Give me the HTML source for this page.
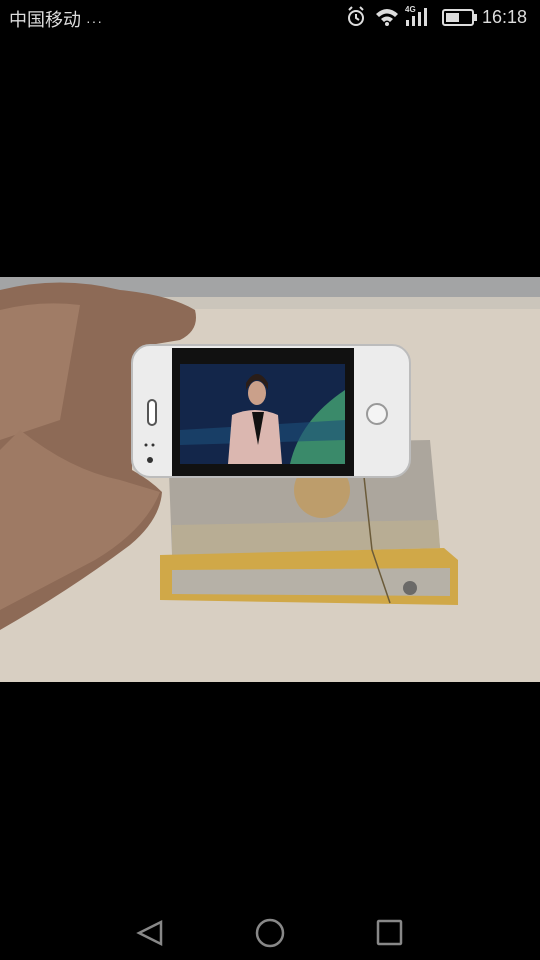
<!DOCTYPE html>
<html><head><meta charset="utf-8"><style>
html,body{margin:0;padding:0;background:#000;width:540px;height:960px;overflow:hidden}
.sb{position:absolute;top:0;left:0;width:540px;height:36px;color:#ddd;font-family:"Liberation Sans","Noto Sans CJK SC",sans-serif}
</style></head><body>
<div class="sb">
<div style="position:absolute;left:9px;top:6px;font-size:18px;color:#ddd">中国移动 <span style="font-size:14px;letter-spacing:1px">···</span></div>
<div style="position:absolute;left:482px;top:7px;font-size:18px;color:#ddd">16:18</div>
</div>
<svg width="540" height="960" style="position:absolute;left:0;top:0" xmlns="http://www.w3.org/2000/svg">
<g fill="none" stroke="#ddd" stroke-width="2">
<circle cx="356" cy="18" r="7"/><path d="M356 14v4l3 2M349 10l3-3M363 10l-3-3"/>
<rect x="443" y="10" width="30" height="15" rx="2"/>
</g>
<rect x="474" y="14" width="3" height="7" fill="#ddd"/>
<rect x="446" y="13" width="13" height="9" fill="#ddd"/>
<path d="M376 14 Q387 4 398 14 L395 17 Q387 10 379 17Z M381 19 Q387 14 393 19 L390 22 Q387 19 384 22Z" fill="#ddd"/>
<circle cx="387" cy="24" r="2" fill="#ddd"/>
<text x="405" y="12" font-size="8" font-weight="bold" fill="#ddd" font-family="Liberation Sans">4G</text>
<g fill="#ddd"><rect x="406" y="20" width="3" height="6"/><rect x="412" y="16" width="3" height="10"/><rect x="418" y="12" width="3" height="14"/><rect x="424" y="8" width="3" height="18"/></g>
<!-- photo -->
<rect x="0" y="277" width="540" height="405" fill="#d8cfc2"/>
<rect x="0" y="277" width="540" height="20" fill="#a3a4a5"/>
<rect x="0" y="297" width="540" height="12" fill="#cbc5bb"/>
<!-- box -->
<path d="M168 445 L430 440 L440 548 L172 555Z" fill="#aca69d"/>
<path d="M172 525 L172 555 L440 548 L438 520Z" fill="#b8ad94"/>
<path d="M160 555 L444 548 L458 560 L458 605 L160 600Z" fill="#d0a848"/>
<path d="M172 570 L450 568 L450 596 L172 594Z" fill="#b6b1a7"/>
<path d="M360 440 L372 550 L390 603" stroke="#6b5b3a" stroke-width="1.5" fill="none"/>
<circle cx="322" cy="490" r="28" fill="#c49a55" opacity="0.7"/>
<circle cx="410" cy="588" r="7" fill="#6b6a68"/>
<!-- hand -->
<path d="M0 290 Q60 275 120 290 Q170 295 195 310 Q200 330 180 340 L150 345 Q140 370 132 400 L132 470 Q150 480 162 492 Q160 520 130 545 Q70 590 0 630Z" fill="#8d6a56"/>
<path d="M0 310 Q40 300 80 305 L60 420 L0 440Z" fill="#a07c66"/>
<path d="M20 430 Q70 470 120 480 L160 492 Q145 530 95 560 L0 610 L0 450Z" fill="#9e7a64"/>
<!-- phone -->
<rect x="132" y="345" width="278" height="132" rx="18" fill="#ececec"/>
<rect x="132" y="345" width="278" height="132" rx="18" fill="none" stroke="#bcbcbc" stroke-width="2"/>
<rect x="172" y="348" width="182" height="128" fill="#111"/>
<rect x="180" y="364" width="165" height="100" fill="#13264a"/>
<path d="M290 464 Q300 420 345 390 L345 464Z" fill="#3a8a6a"/>
<path d="M180 430 L345 420 L345 440 L180 445Z" fill="#1d4f7a" opacity="0.6"/>
<path d="M228 464 L232 415 Q255 405 278 415 L282 464Z" fill="#dbb7b0"/>
<path d="M252 412 L258 445 L264 412Z" fill="#111"/>
<ellipse cx="257" cy="393" rx="9" ry="12" fill="#caa08a"/>
<path d="M246 390 Q257 370 268 390 L268 383 Q257 365 246 383Z" fill="#2a1d18"/>
<rect x="148" y="400" width="8" height="25" rx="4" fill="#fff" stroke="#555" stroke-width="2"/>
<circle cx="150" cy="460" r="3" fill="#333"/>
<circle cx="146" cy="445" r="1.5" fill="#333"/><circle cx="153" cy="445" r="1.5" fill="#333"/>
<circle cx="377" cy="414" r="10" fill="#f4f4f4" stroke="#999" stroke-width="2"/>
<!-- nav -->
<g fill="none" stroke="#888" stroke-width="2.5">
<path d="M161 922 L161 944 L139 933Z"/>
<circle cx="270" cy="933" r="13"/>
<rect x="378" y="921" width="23" height="23" rx="1"/>
</g>
</svg>
</body></html>
